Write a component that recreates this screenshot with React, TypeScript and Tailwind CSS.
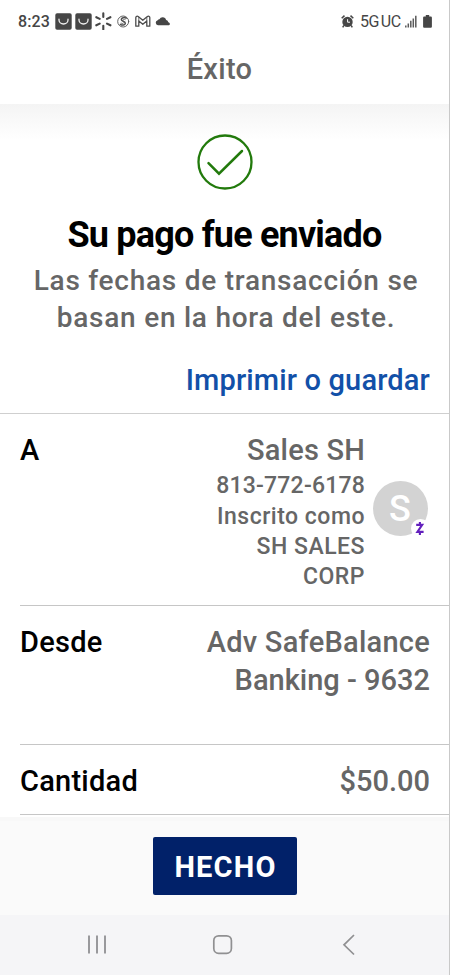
import type { ReactNode } from "react"

function BagIcon() {
  return (
    <svg className="h-[18px] w-[17px]" viewBox="0 0 17 18" fill="none">
      <rect x="0.3" y="1.3" width="16.4" height="16.4" rx="1.8" fill="#464646" />
      <path d="M4 7.2v.9a4.5 3.9 0 0 0 9 0v-.9" stroke="#f1f1f1" strokeWidth="1.3" strokeLinecap="round" />
    </svg>
  )
}

function SparkIcon() {
  return (
    <svg className="ml-[3px] h-[18px] w-[17px]" viewBox="0 0 17 18" stroke="#464646" strokeWidth="2.1" strokeLinecap="round">
      <path d="M8.3 1.3v3.6M8.3 13.8v3.6M1.3 5.2l3.4 1.7M12 6.9l3.4-1.7M1.3 13.3l3.4-1.7M12 11.6l3.4 1.7" />
    </svg>
  )
}

function CoinIcon() {
  return (
    <svg className="ml-[5px] h-[18px] w-[13px]" viewBox="0 0 13 18" fill="none" stroke="#505050" strokeLinecap="round">
      <circle cx="6.2" cy="9.5" r="5.5" strokeWidth="0.9" />
      <path d="M9.2 6.2C7.2 4.9 4.6 5.8 4.3 7.4c-.3 1.9 4.3 1.8 4 4-.2 1.7-3 2.3-4.9 1" strokeWidth="1.5" />
      <path d="M8.2 7.6C7 7 6 7.3 6.1 7.9M4.2 11.1c1 .7 2.3.6 2.2 0" strokeWidth="0.8" />
    </svg>
  )
}

function MailIcon() {
  return (
    <svg className="ml-[5px] h-[18px] w-[16px]" viewBox="0 0 16 18" fill="none" stroke="#4c4c4c" strokeWidth="1.3" strokeLinejoin="round">
      <path d="M.8 14.2V5.6c0-1.3 1.5-1.8 2.4-1.1l4.6 3.8 4.6-3.8c.9-.7 2.4-.2 2.4 1.1v8.6h-3V9l-4 3.3L3.8 9v5.2z" />
      <path d="M3.8 9V5M11.8 9V5" strokeWidth="0.8" />
    </svg>
  )
}

function CloudIcon() {
  return (
    <svg className="ml-1 h-[18px] w-[15px]" viewBox="0 0 15 18" fill="#464646">
      <path d="M3 13.3a2.6 2.6 0 0 1-.3-5.1 2 2 0 0 1 1.7-.9 3.6 3.6 0 0 1 6.8.6 2.7 2.7 0 0 1 2.1 2.3c1 .3 1.6.9 1.6 1.7 0 .9-.8 1.4-1.7 1.4z" />
    </svg>
  )
}

function AlarmIcon() {
  return (
    <svg className="h-[18px] w-[13px]" viewBox="0 0 13 18" fill="none">
      <path d="M.7 6.2 3.5 3.6M12.3 6.2 9.5 3.6M2.9 13.4l-1.2 2M10.1 13.4l1.2 2" stroke="#464646" strokeWidth="1.5" />
      <circle cx="6.5" cy="9.9" r="5.2" fill="#464646" />
      <path d="M6.6 7.2v3h2.4" stroke="#fff" strokeWidth="1" />
    </svg>
  )
}

function SignalIcon() {
  return (
    <svg className="ml-[5px] h-[18px] w-[12px]" viewBox="0 0 12 18" stroke="#5a5a5a" strokeWidth="1.5">
      <path d="M.8 13.5v2M3.3 11.5v4M5.8 8.8v6.7M8.3 6.5v9M10.8 3.7v11.8" />
    </svg>
  )
}

function BatteryIcon() {
  return (
    <svg className="ml-[6px] h-[18px] w-[9px]" viewBox="0 0 9 18" fill="#464646">
      <path d="M2.8 3h3.4v1.4h1.3c.9 0 1.4.5 1.4 1.4v8.6c0 .9-.5 1.4-1.4 1.4h-6c-.9 0-1.4-.5-1.4-1.4V5.8c0-.9.5-1.4 1.4-1.4h1.3z" />
    </svg>
  )
}

function StatusBar() {
  return (
    <div className="flex h-[42px] items-start justify-between pt-3 pr-[17px] pl-[18px] text-base leading-[19px] font-medium text-[#464646]">
      <div className="flex">
        <span className="mr-[5px] w-8 tracking-[0.1px]">8:23</span>
        <BagIcon />
        <div className="w-[3px]"></div>
        <BagIcon />
        <SparkIcon />
        <CoinIcon />
        <MailIcon />
        <CloudIcon />
      </div>
      <div className="flex">
        <AlarmIcon />
        <span className="ml-[6px] w-10 font-normal whitespace-nowrap tracking-[-0.5px] [word-spacing:-1.5px]">5G UC</span>
        <SignalIcon />
        <BatteryIcon />
      </div>
    </div>
  )
}

function Row({ label, className, children }: { label: string; className: string; children: ReactNode }) {
  return (
    <div className={`ml-5 flex justify-between border-b border-[#c6c6c6] pr-[19px] text-[29px] leading-[38px] ${className}`}>
      <span className="tracking-[0.25px] text-black">{label}</span>
      {children}
    </div>
  )
}

function Avatar() {
  return (
    <div className="relative mt-[50px] mr-[2.5px] ml-[7.5px] flex h-[55px] w-[55px] items-center justify-center rounded-full bg-[#d3d3d3] pt-[2px] text-[36px] leading-none text-white">
      S
      <div className="absolute right-[-2px] bottom-[-2px] flex h-[19px] w-[19px] items-center justify-center rounded-full bg-white">
        <svg className="h-[15px] w-[10px]" viewBox="0 0 10 15" fill="none" stroke="#6320bd" strokeWidth="2.1">
          <path d="M1.2 3.9h6L2.4 10.9h6.2M4.9.9v3M4.9 11v3" />
        </svg>
      </div>
    </div>
  )
}

export default function App() {
  return (
    <div className="flex h-[975px] w-[450px] flex-col overflow-hidden border-r border-[#c9c9c9] bg-white font-[Roboto,sans-serif] font-medium text-[#666]">
      <StatusBar />
      <header className="h-[62px] pt-[8px] pr-[10px] text-center text-[29px] leading-[38px] tracking-[0.3px]">Éxito</header>

      <main className="flex h-[713px] flex-col">
        {/* Confirmation */}
        <section className="flex h-[310px] shrink-0 flex-col items-center border-b border-[#cfcfcf] bg-linear-to-b from-[#f4f4f4] to-white to-[36px] pt-[30px]">
          <svg className="h-14 w-14" viewBox="0 0 56 56" fill="none" stroke="#227a0c">
            <circle cx="28" cy="28" r="26.5" strokeWidth="2.3" />
            <path d="M11.5 29.2 22 39.7 45 17" strokeWidth="2.5" strokeLinecap="round" />
          </svg>
          <h1 className="mt-[23px] text-[36px] leading-[44px] font-bold tracking-[-0.8px] whitespace-nowrap text-black">
            Su pago fue enviado
          </h1>
          <p className="mt-[6px] pl-[3px] text-center text-[28px] leading-[36.5px] tracking-[0.75px] whitespace-nowrap">
            Las fechas de transacción se
            <br />
            basan en la hora del este.
          </p>
          <a className="mt-[25px] mr-[19px] self-end text-[29px] leading-[38px] tracking-[0.15px] text-[#1250a8]">Imprimir o guardar</a>
        </section>

        {/* Details */}
        <Row label="A" className="h-[192px] shrink-0 pt-[16.5px]">
          <div className="flex">
            <div className="text-right">
              <div className="tracking-[0.2px]">Sales SH</div>
              <div className="pt-[2px] text-[23px] leading-[30px] tracking-[0.5px]">
                <div className="tracking-[0.2px]">813-772-6178</div>
                <div className="mt-[1px]">Inscrito como</div>
                <div>SH SALES</div>
                <div>CORP</div>
              </div>
            </div>
            <Avatar />
          </div>
        </Row>
        <Row label="Desde" className="h-[139px] shrink-0 pt-[16.5px]">
          <span className="text-right">
            <span className="tracking-[0.25px]">Adv SafeBalance</span>
            <br />
            Banking - 9632
          </span>
        </Row>
        <Row label="Cantidad" className="h-[70px] shrink-0 pt-[16.5px]">
          <span>$50.00</span>
        </Row>
      </main>

      <footer className="flex h-[98px] shrink-0 justify-center border-t-4 border-[#f8f8f8] bg-[#fafafa] pt-4">
        <button className="h-[58px] w-[144px] rounded-[2px] bg-[#012169] pt-[1px] pl-[2px] text-[29px] leading-[58px] font-bold tracking-[1.2px] text-white">
          HECHO
        </button>
      </footer>

      {/* Android navigation */}
      <nav className="flex h-[60px] shrink-0 items-start bg-[#f5f5f7] pt-[19px] pl-[87px]">
        <svg className="h-[22px] w-[20px]" viewBox="0 0 20 22" stroke="#909092" strokeWidth="1.8">
          <path d="M2 1.5v18M10 1.5v18M18 1.5v18" />
        </svg>
        <svg className="ml-[105px] h-[22px] w-[22px]" viewBox="0 0 22 22" fill="none" stroke="#909092" strokeWidth="1.7">
          <rect x="1.8" y="1.8" width="17.6" height="17.6" rx="4.8" />
        </svg>
        <svg className="ml-[108px] h-[22px] w-[14px]" viewBox="0 0 14 22" fill="none" stroke="#909092" strokeWidth="1.7">
          <path d="M12 1 2 10.8 12 20.5" />
        </svg>
      </nav>
    </div>
  )
}
